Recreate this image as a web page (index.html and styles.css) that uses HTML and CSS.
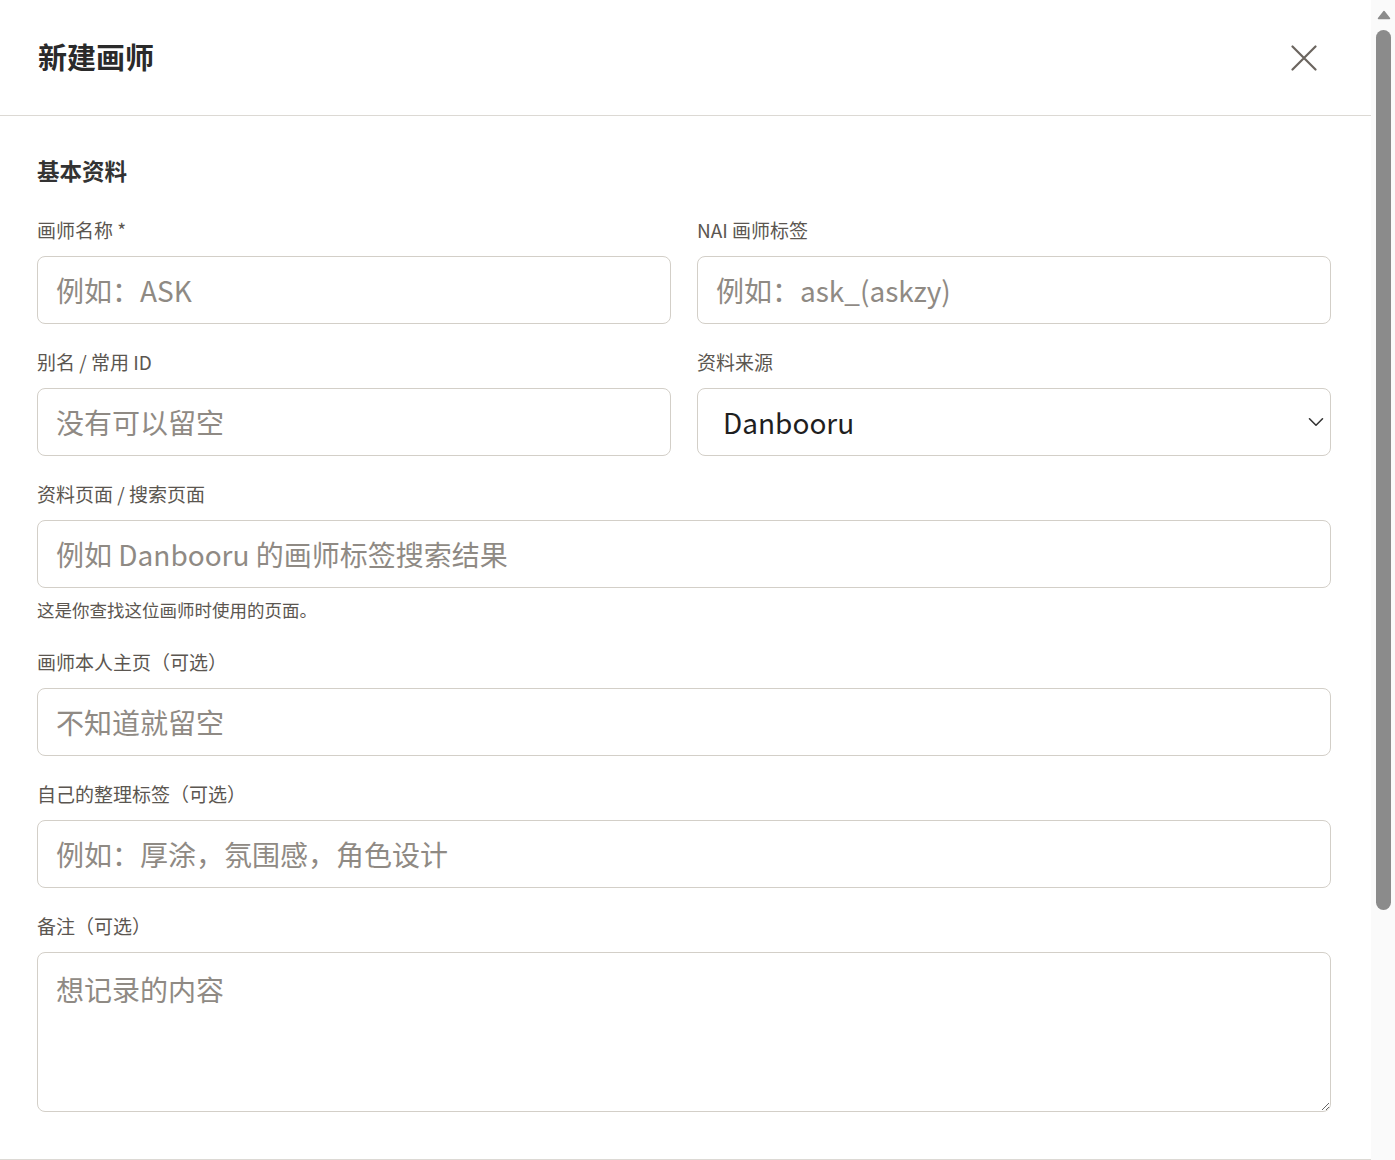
FILE: index.html
```html
<!DOCTYPE html>
<html lang="zh-CN">
<head>
    <meta charset="UTF-8">
    <meta name="viewport" content="width=device-width, initial-scale=1.0">
    <title>新建画师</title>
    <link rel="stylesheet" href="styles.css">
</head>
<body>
    <div class="modal">
        <div class="modal-header">
            <h1>新建画师</h1>
            <button class="close-btn" type="button" aria-label="关闭">
                <svg width="26" height="26" viewBox="0 0 26 26" fill="none" stroke="currentColor" stroke-width="2.2" stroke-linecap="round">
                    <path d="M1.5 1.5 L24.5 24.5 M24.5 1.5 L1.5 24.5"/>
                </svg>
            </button>
        </div>

        <form class="modal-body">
            <h2>基本资料</h2>

            <div class="form-row">
                <div class="form-group">
                    <label for="name">画师名称 *</label>
                    <input type="text" id="name" placeholder="例如：ASK" required>
                </div>
                <div class="form-group">
                    <label for="nai-tag">NAI 画师标签</label>
                    <input type="text" id="nai-tag" placeholder="例如：ask_(askzy)">
                </div>
            </div>

            <div class="form-row">
                <div class="form-group">
                    <label for="alias">别名 / 常用 ID</label>
                    <input type="text" id="alias" placeholder="没有可以留空">
                </div>
                <div class="form-group">
                    <label for="source">资料来源</label>
                    <div class="select-box">
                        <select id="source">
                            <option>Danbooru</option>
                            <option>Pixiv</option>
                            <option>Twitter / X</option>
                            <option>其他</option>
                        </select>
                        <svg width="16" height="10" viewBox="0 0 16 10" fill="none" stroke="currentColor" stroke-width="1.6" stroke-linecap="round" stroke-linejoin="round">
                            <path d="M1.5 1.8 L8 8.2 L14.5 1.8"/>
                        </svg>
                    </div>
                </div>
            </div>

            <div class="form-group">
                <label for="profile">资料页面 / 搜索页面</label>
                <input type="text" id="profile" placeholder="例如 Danbooru 的画师标签搜索结果">
                <p class="hint">这是你查找这位画师时使用的页面。</p>
            </div>

            <div class="form-group">
                <label for="homepage">画师本人主页（可选）</label>
                <input type="text" id="homepage" placeholder="不知道就留空">
            </div>

            <div class="form-group">
                <label for="tags">自己的整理标签（可选）</label>
                <input type="text" id="tags" placeholder="例如：厚涂，氛围感，角色设计">
            </div>

            <div class="form-group">
                <label for="note">备注（可选）</label>
                <textarea id="note" placeholder="想记录的内容"></textarea>
            </div>
        </form>
    </div>

    <!-- scroll rail for the dialog -->
    <div class="scroll-rail">
        <svg class="rail-arrow" width="14" height="10" viewBox="0 0 14 10">
            <path d="M7 1.5 L12.5 8.5 L1.5 8.5 Z" fill="#8b8b8b" stroke="#8b8b8b" stroke-width="1.5" stroke-linejoin="round"/>
        </svg>
        <div class="rail-thumb"></div>
    </div>
</body>
</html>
```

FILE: styles.css
```css
body {
    margin: 0;
    height: 100vh;
    overflow: hidden;
    display: flex;
    font-family: "Noto Sans CJK SC", "Noto Sans", sans-serif;
    color: #333;
    background: #fff;
}

.modal {
    flex: 1;
    min-width: 0;
    background: #fff;
}
.modal-header {
    display: flex;
    align-items: center;
    justify-content: space-between;
    height: 115px;
    padding: 0 47px 0 38px;
    border-bottom: 1px solid #dcd9d4;
}
.modal-header h1 {
    margin: 0;
    font-size: 29px;
    font-weight: 700;
    color: #2a2a2a;
    line-height: 1;
    position: relative;
    top: -1px;
}
.close-btn {
    width: 40px;
    height: 40px;
    padding: 0;
    border: none;
    background: none;
    color: #6b655f;
    cursor: pointer;
    display: flex;
    align-items: center;
    justify-content: center;
}

.modal-body {
    padding: 39px 40px 47px 37px;
    display: flex;
    flex-direction: column;
    gap: 26px;
    border-bottom: 1px solid #dcd9d4;
}
.modal-body h2 {
    margin: 0 0 7px;
    font-size: 22.5px;
    font-weight: 700;
    line-height: 30px;
    color: #333;
}
.form-row {
    display: grid;
    grid-template-columns: 1fr 1fr;
    gap: 26px;
}
.form-group {
    display: flex;
    flex-direction: column;
}
label {
    font-size: 19px;
    line-height: 26px;
    color: #5b5650;
    margin-bottom: 12px;
    position: relative;
    top: -1px;
}
input,
textarea,
.select-box {
    box-sizing: border-box;
    width: 100%;
    border: 1px solid #d3cfc8;
    border-radius: 8px;
    background: #fff;
    font-family: inherit;
}
input,
textarea {
    font-size: 28px;
    color: #222;
    padding: 0 18px;
}
input {
    height: 68px;
}
textarea {
    height: 160px;
    padding-top: 15px;
    line-height: 42px;
    resize: vertical;
}
input::placeholder,
textarea::placeholder {
    color: #8f8a84;
}
input:focus,
textarea:focus,
select:focus {
    outline: none;
}
.select-box {
    display: flex;
    align-items: center;
    height: 68px;
    padding-right: 6px;
    color: #333;
}
.select-box select {
    flex: 1;
    height: 100%;
    appearance: none;
    border: none;
    background: transparent;
    font-family: inherit;
    font-size: 28px;
    color: #1f1f1f;
    padding: 0 0 0 25px;
}
.hint {
    margin: 10px 0 2px;
    font-size: 17.5px;
    line-height: 24px;
    color: #5b5650;
}

.scroll-rail {
    width: 24px;
    flex-shrink: 0;
    display: flex;
    flex-direction: column;
    align-items: center;
    background: #fafafa;
}
.rail-arrow {
    margin-top: 10px;
    margin-left: 1px;
}
.rail-thumb {
    width: 15px;
    height: 880px;
    margin-top: 10px;
    margin-left: 1px;
    border-radius: 8px;
    background: #8b8b8b;
}
```
